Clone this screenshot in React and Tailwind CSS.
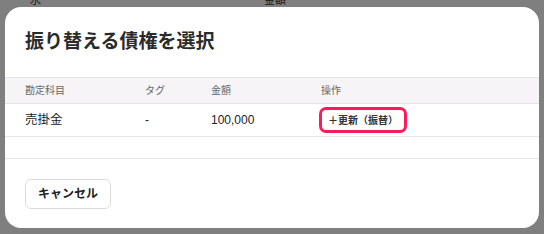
import React from 'react';

const font = { fontFamily: '"Liberation Sans", "Noto Sans CJK JP", sans-serif' };

function BackgroundPage() {
  // 後ろの画面（オーバーレイ越しに薄く見える部分）
  return (
    <div className="h-full w-full bg-white text-[11px] text-[#333]">
      <div className="flex h-[8px] items-end">
        <span className="ml-[30px]">水</span>
        <span className="ml-auto mr-[258px]">金額</span>
      </div>
    </div>
  );
}

function SelectDialog() {
  return (
    <div className="flex h-[221px] w-[534px] flex-col overflow-hidden rounded-[16px] bg-white">
      {/* タイトル */}
      <div className="flex h-[70px] items-center px-[20px]">
        <h2 className="text-[19px] font-bold leading-[28px] text-[#2b2b2b]">振り替える債権を選択</h2>
      </div>

      {/* テーブル */}
      <div className="border-t border-[#e6e4e6]">
        <div className="grid h-[26px] grid-cols-[120px_66px_108px_1fr] items-center border-b border-[#e6e4e6] bg-[#f6f4f6] pl-[20px] text-[10px] text-[#666]">
          <span>勘定科目</span>
          <span>タグ</span>
          <span>金額</span>
          <span className="pl-[2px]">操作</span>
        </div>
        <div className="grid h-[33px] grid-cols-[120px_66px_108px_1fr] items-center border-b border-[#e6e4e6] pl-[20px] text-[12px] text-[#222]">
          <span className="text-[12.5px]">売掛金</span>
          <span>-</span>
          <span>100,000</span>
          <div>
            <button className="flex h-[26px] w-[88px] items-center justify-center rounded-[7px] border-[3px] border-[#ff1a5c] bg-white text-[10px] font-bold text-[#333]">
              ＋更新（振替）
            </button>
          </div>
        </div>
        <div className="h-[22px] border-b border-[#e6e4e6]" />
      </div>

      {/* フッター */}
      <div className="px-[20px] pt-[20px]">
        <button className="h-[30px] w-[86px] rounded-[6px] border border-[#dcdcdc] bg-white text-[12px] font-bold text-[#222]">
          キャンセル
        </button>
      </div>
    </div>
  );
}

export default function App() {
  return (
    <div className="relative h-[234px] w-[544px] overflow-hidden" style={font}>
      <BackgroundPage />
      <div className="absolute inset-0 bg-black/50 pl-[5px] pt-[7px]">
        <SelectDialog />
      </div>
    </div>
  );
}
